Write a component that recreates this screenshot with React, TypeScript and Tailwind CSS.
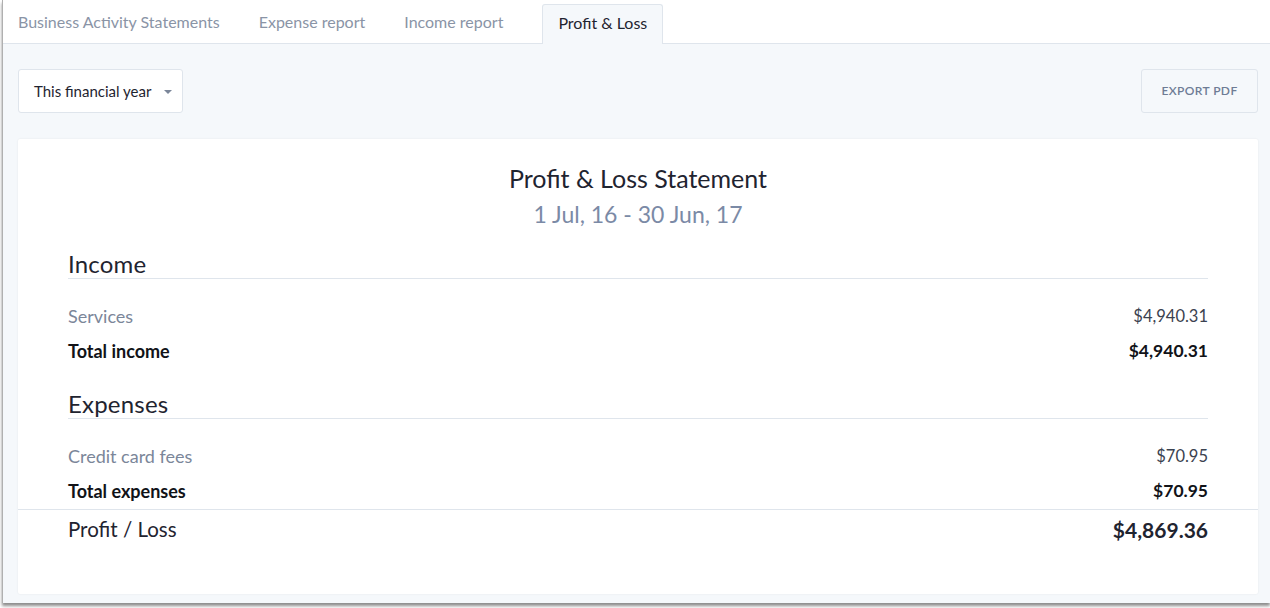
import React from "react";

const Row = ({ label, value, bold }: { label: string; value: string; bold?: boolean }) => (
  <div className="flex h-[35px] items-center justify-between">
    <span className={bold ? "text-[18px] font-bold text-[#111318]" : "text-[18px] text-[#7b8699]"}>{label}</span>
    <span className={bold ? "text-[17.5px] font-bold text-[#111318]" : "text-[16.5px] text-[#3b4250]"}>{value}</span>
  </div>
);

export default function App() {
  const tabs = ["Business Activity Statements", "Expense report", "Income report"];
  return (
    <div className="h-[608px] w-[1270px] bg-white font-['Lato',sans-serif]">
      <div className="ml-[2px] flex h-[603px] flex-col border-l border-[#b0b0b0] bg-[#f5f8fb] shadow-[0_3px_3px_rgba(0,0,0,0.45)]">
        <div className="flex h-[44px] items-end border-b border-[#dfe5ec] bg-white pl-[15px]">
          {tabs.map((t) => (
            <div key={t} className="mr-[39px] flex h-[40px] items-center pb-[2px] text-[16px] text-[#8a94a6]">
              {t}
            </div>
          ))}
          <div className="-mb-px flex h-[40px] items-center rounded-t-[3px] border border-b-0 border-[#dfe5ec] bg-[#f5f8fb] px-[15px] pb-[3px] text-[16px] text-[#1f2430]">
            Profit &amp; Loss
          </div>
        </div>
        <div className="flex flex-1 flex-col pl-[15px] pr-[12px] pt-[25px] pb-[9px]">
          <div className="flex items-center justify-between">
            <div className="flex h-[44px] w-[165px] items-center justify-between rounded-[3px] border border-[#dfe5ec] bg-white pl-[15px] pr-[10px] text-[15px] text-[#1f2430]">
              <span>This financial year</span>
              <svg width="8" height="4" viewBox="0 0 8 4" className="mt-[1px]">
                <path d="M0 0h8L4 4z" fill="#7b8699" />
              </svg>
            </div>
            <div className="flex h-[44px] w-[117px] items-center justify-center rounded-[3px] border border-[#dfe5ec] bg-[#f5f8fb] text-[12px] font-semibold tracking-[0.4px] text-[#6e7c95]">
              EXPORT PDF
            </div>
          </div>
          <div className="mt-[26px] flex flex-1 flex-col rounded-[2px] bg-white pt-[24px] shadow-[0_0_2px_rgba(0,0,0,0.08)]">
            <div className="text-center text-[25px] leading-[30px] text-[#1f2430]">Profit &amp; Loss Statement</div>
            <div className="mt-[7px] text-center text-[23px] leading-[28px] text-[#7b8aa6]">1 Jul, 16 - 30 Jun, 17</div>
            <div className="px-[50px]">
              <div className="mt-[21px] border-b border-[#dfe5ec] text-[24px] leading-[29px] tracking-[0.2px] text-[#1f2430]">Income</div>
              <div className="mt-[20px]">
                <Row label="Services" value="$4,940.31" />
                <Row label="Total income" value="$4,940.31" bold />
              </div>
              <div className="mt-[20px] border-b border-[#dfe5ec] text-[24px] leading-[29px] tracking-[0.2px] text-[#1f2430]">Expenses</div>
              <div className="mt-[20px]">
                <Row label="Credit card fees" value="$70.95" />
                <Row label="Total expenses" value="$70.95" bold />
              </div>
            </div>
            <div className="border-t border-[#dfe5ec] px-[50px]">
              <div className="flex h-[39px] items-center justify-between">
                <span className="text-[20.5px] text-[#1f2430]">Profit / Loss</span>
                <span className="text-[21px] font-bold text-[#1f2430]">$4,869.36</span>
              </div>
            </div>
          </div>
        </div>
      </div>
    </div>
  );
}
